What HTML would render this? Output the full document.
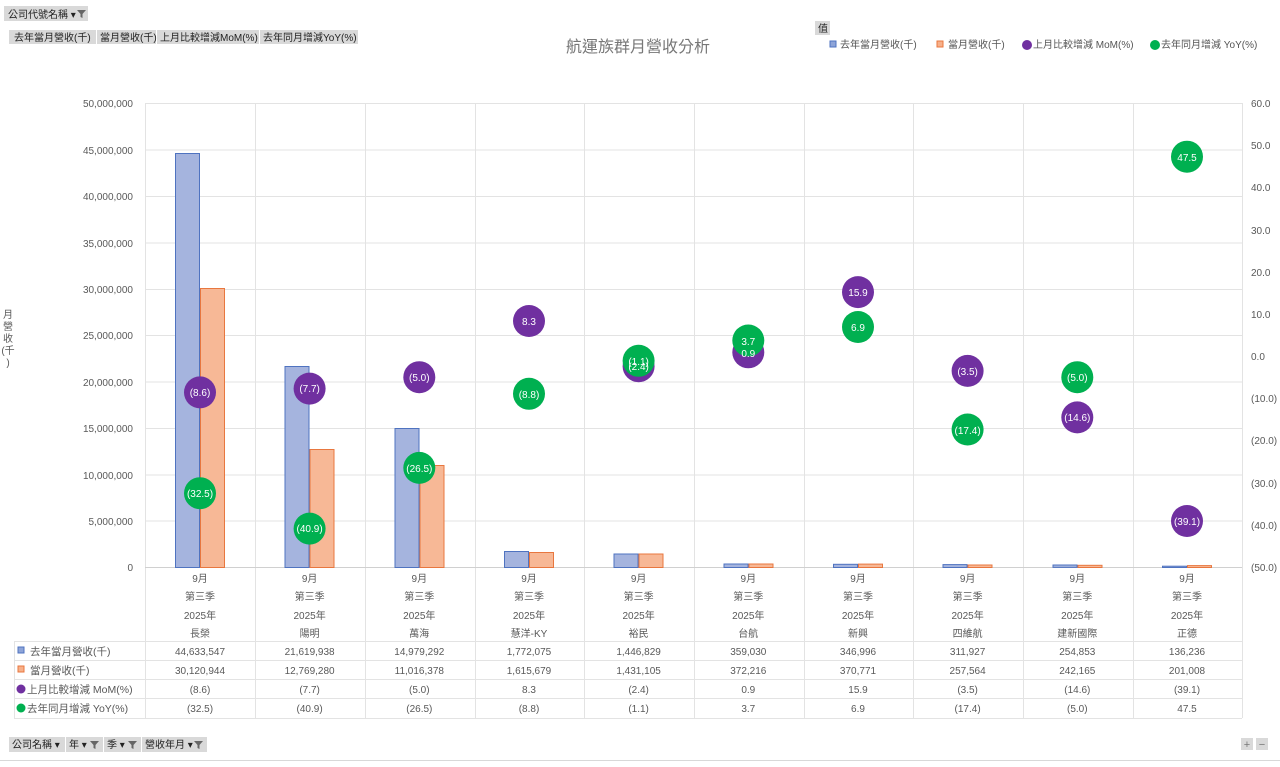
<!DOCTYPE html>
<html><head><meta charset="utf-8"><style>
body{margin:0;background:#fff;width:1280px;height:762px;overflow:hidden;font-family:"Liberation Sans","Noto Sans CJK TC",sans-serif}
svg text{font-family:"Liberation Sans","Noto Sans CJK TC",sans-serif}
</style></head><body>
<svg width="1280" height="762" viewBox="0 0 1280 762" xmlns="http://www.w3.org/2000/svg">
<rect x="4" y="6" width="84" height="15" fill="#d9d9d9"/>
<text x="8" y="18" font-size="10" fill="#222">公司代號名稱 ▾</text>
<path d="M77 10h9l-3.5 4v4l-2-1v-3z" fill="#666"/>
<rect x="9" y="30" width="87" height="14" fill="#d9d9d9"/>
<rect x="97" y="30" width="59" height="14" fill="#d9d9d9"/>
<rect x="157" y="30" width="102" height="14" fill="#d9d9d9"/>
<rect x="260" y="30" width="98" height="14" fill="#d9d9d9"/>
<g font-size="10" fill="#222"><text x="14" y="41">去年當月營收(千)</text><text x="100" y="41">當月營收(千)</text><text x="160" y="41">上月比較增減MoM(%)</text><text x="263" y="41">去年同月增減YoY(%)</text></g>
<text x="638" y="52" font-size="16" fill="#777" text-anchor="middle">航運族群月營收分析</text>
<rect x="815" y="21" width="15" height="14" fill="#d9d9d9"/><text x="818" y="32" font-size="10" fill="#222">值</text>
<g font-size="10" fill="#555">
<rect x="830" y="41" width="6" height="6" fill="#8ea4d8" stroke="#4f73c0"/><text x="840" y="48">去年當月營收(千)</text>
<rect x="937" y="41" width="6" height="6" fill="#f7b08a" stroke="#e8773f"/><text x="948" y="48">當月營收(千)</text>
<circle cx="1027" cy="45" r="5" fill="#7030a0"/><text x="1033" y="48">上月比較增減 MoM(%)</text>
<circle cx="1155" cy="45" r="5" fill="#00b050"/><text x="1161" y="48">去年同月增減 YoY(%)</text>
</g>
<g stroke="#e3e3e3" stroke-width="1">
<line x1="145" y1="103.5" x2="1242" y2="103.5"/><line x1="145" y1="150" x2="1242" y2="150"/><line x1="145" y1="196.5" x2="1242" y2="196.5"/><line x1="145" y1="243" x2="1242" y2="243"/><line x1="145" y1="289.5" x2="1242" y2="289.5"/><line x1="145" y1="335.5" x2="1242" y2="335.5"/><line x1="145" y1="382" x2="1242" y2="382"/><line x1="145" y1="428.5" x2="1242" y2="428.5"/><line x1="145" y1="475" x2="1242" y2="475"/><line x1="145" y1="521" x2="1242" y2="521"/>
<line x1="145.5" y1="103" x2="145.5" y2="718"/><line x1="255.5" y1="103" x2="255.5" y2="718"/><line x1="365.5" y1="103" x2="365.5" y2="718"/><line x1="475.5" y1="103" x2="475.5" y2="718"/><line x1="584.5" y1="103" x2="584.5" y2="718"/><line x1="694.5" y1="103" x2="694.5" y2="718"/><line x1="804.5" y1="103" x2="804.5" y2="718"/><line x1="913.5" y1="103" x2="913.5" y2="718"/><line x1="1023.5" y1="103" x2="1023.5" y2="718"/><line x1="1133.5" y1="103" x2="1133.5" y2="718"/><line x1="1242.5" y1="103" x2="1242.5" y2="718"/>
<line x1="14" y1="641.5" x2="1242" y2="641.5"/><line x1="14" y1="660.5" x2="1242" y2="660.5"/><line x1="14" y1="679.5" x2="1242" y2="679.5"/><line x1="14" y1="698.5" x2="1242" y2="698.5"/><line x1="14" y1="718.5" x2="1242" y2="718.5"/><line x1="14.5" y1="641" x2="14.5" y2="718"/>
</g>
<line x1="145" y1="567.5" x2="1242" y2="567.5" stroke="#d0d0d0"/>
<g font-size="10" fill="#595959" text-anchor="end">
<text x="133" y="107">50,000,000</text><text x="133" y="154">45,000,000</text><text x="133" y="200">40,000,000</text><text x="133" y="247">35,000,000</text><text x="133" y="293">30,000,000</text><text x="133" y="339">25,000,000</text><text x="133" y="386">20,000,000</text><text x="133" y="432">15,000,000</text><text x="133" y="479">10,000,000</text><text x="133" y="525">5,000,000</text><text x="133" y="571">0</text>
</g>
<g font-size="10" fill="#595959">
<text x="1251" y="107">60.0</text><text x="1251" y="149">50.0</text><text x="1251" y="191">40.0</text><text x="1251" y="234">30.0</text><text x="1251" y="276">20.0</text><text x="1251" y="318">10.0</text><text x="1251" y="360">0.0</text><text x="1251" y="402">(10.0)</text><text x="1251" y="444">(20.0)</text><text x="1251" y="487">(30.0)</text><text x="1251" y="529">(40.0)</text><text x="1251" y="571">(50.0)</text>
</g>
<g font-size="10" fill="#595959" text-anchor="middle"><text x="8" y="318">月</text><text x="8" y="330">營</text><text x="8" y="342">收</text><text x="8" y="354">(千</text><text x="8" y="366">)</text></g>
<g fill="#a5b4de" stroke="#4f73c0" stroke-width="1">
<rect x="175.5" y="153.5" width="24" height="414"/><rect x="285" y="366.5" width="24" height="201"/><rect x="395" y="428.5" width="24" height="139"/><rect x="504.5" y="551.5" width="24" height="16"/><rect x="614" y="554" width="24" height="13.5"/><rect x="724" y="564" width="24" height="3.5"/><rect x="833.5" y="564.3" width="24" height="3.2"/><rect x="943" y="564.6" width="24" height="2.9"/><rect x="1053" y="565" width="24" height="2.4"/><rect x="1162.5" y="566.2" width="24" height="1.3"/>
</g>
<g fill="#f7b896" stroke="#e8773f" stroke-width="1">
<rect x="200.5" y="288.5" width="24" height="279"/><rect x="310" y="449.5" width="24" height="118"/><rect x="420" y="465.5" width="24" height="102"/><rect x="529.5" y="552.5" width="24" height="15"/><rect x="639" y="554" width="24" height="13.5"/><rect x="749" y="564" width="24" height="3.5"/><rect x="858.5" y="564.1" width="24" height="3.4"/><rect x="968" y="565" width="24" height="2.5"/><rect x="1078" y="565.3" width="24" height="2.2"/><rect x="1187.5" y="565.6" width="24" height="1.9"/>
</g>
<g font-size="10" fill="#fff" text-anchor="middle">
<circle cx="200" cy="392.4" r="16" fill="#7030a0"/><text x="200" y="396">(8.6)</text>
<circle cx="309.6" cy="388.6" r="16" fill="#7030a0"/><text x="309.6" y="392">(7.7)</text>
<circle cx="419.3" cy="377.2" r="16" fill="#7030a0"/><text x="419.3" y="381">(5.0)</text>
<circle cx="529" cy="321" r="16" fill="#7030a0"/><text x="529" y="325">8.3</text>
<circle cx="638.6" cy="366.2" r="16" fill="#7030a0"/>
<circle cx="748.3" cy="352.3" r="16" fill="#7030a0"/>
<circle cx="858" cy="292.1" r="16" fill="#7030a0"/><text x="858" y="296">15.9</text>
<circle cx="967.6" cy="370.9" r="16" fill="#7030a0"/><text x="967.6" y="375">(3.5)</text>
<circle cx="1077.3" cy="417.4" r="16" fill="#7030a0"/><text x="1077.3" y="421">(14.6)</text>
<circle cx="1187" cy="521" r="16" fill="#7030a0"/><text x="1187" y="525">(39.1)</text>
<circle cx="200" cy="493.2" r="16" fill="#00b050"/><text x="200" y="497">(32.5)</text>
<circle cx="309.6" cy="528.6" r="16" fill="#00b050"/><text x="309.6" y="532">(40.9)</text>
<circle cx="419.3" cy="467.9" r="16" fill="#00b050"/><text x="419.3" y="472">(26.5)</text>
<circle cx="529" cy="393.8" r="16" fill="#00b050"/><text x="529" y="398">(8.8)</text>
<circle cx="638.6" cy="360.8" r="16" fill="#00b050"/><text x="638.6" y="365">(1.1)</text><text x="638.6" y="370">(2.4)</text>
<circle cx="748.3" cy="340.5" r="16" fill="#00b050"/><text x="748.3" y="345">3.7</text><text x="748.3" y="357">0.9</text>
<circle cx="858" cy="327" r="16" fill="#00b050"/><text x="858" y="331">6.9</text>
<circle cx="967.6" cy="429.5" r="16" fill="#00b050"/><text x="967.6" y="434">(17.4)</text>
<circle cx="1077.3" cy="377.2" r="16" fill="#00b050"/><text x="1077.3" y="381">(5.0)</text>
<circle cx="1187" cy="156.7" r="16" fill="#00b050"/><text x="1187" y="161">47.5</text>
</g>
<g font-size="10" fill="#595959" text-anchor="middle">
<text x="200" y="582">9月</text><text x="200" y="600">第三季</text><text x="200" y="619">2025年</text><text x="200" y="637">長榮</text>
<text x="309.6" y="582">9月</text><text x="309.6" y="600">第三季</text><text x="309.6" y="619">2025年</text><text x="309.6" y="637">陽明</text>
<text x="419.3" y="582">9月</text><text x="419.3" y="600">第三季</text><text x="419.3" y="619">2025年</text><text x="419.3" y="637">萬海</text>
<text x="529" y="582">9月</text><text x="529" y="600">第三季</text><text x="529" y="619">2025年</text><text x="529" y="637">慧洋-KY</text>
<text x="638.6" y="582">9月</text><text x="638.6" y="600">第三季</text><text x="638.6" y="619">2025年</text><text x="638.6" y="637">裕民</text>
<text x="748.3" y="582">9月</text><text x="748.3" y="600">第三季</text><text x="748.3" y="619">2025年</text><text x="748.3" y="637">台航</text>
<text x="858" y="582">9月</text><text x="858" y="600">第三季</text><text x="858" y="619">2025年</text><text x="858" y="637">新興</text>
<text x="967.6" y="582">9月</text><text x="967.6" y="600">第三季</text><text x="967.6" y="619">2025年</text><text x="967.6" y="637">四維航</text>
<text x="1077.3" y="582">9月</text><text x="1077.3" y="600">第三季</text><text x="1077.3" y="619">2025年</text><text x="1077.3" y="637">建新國際</text>
<text x="1187" y="582">9月</text><text x="1187" y="600">第三季</text><text x="1187" y="619">2025年</text><text x="1187" y="637">正德</text>
<g transform="translate(0,655)"><text x="200">44,633,547</text><text x="309.6">21,619,938</text><text x="419.3">14,979,292</text><text x="529">1,772,075</text><text x="638.6">1,446,829</text><text x="748.3">359,030</text><text x="858">346,996</text><text x="967.6">311,927</text><text x="1077.3">254,853</text><text x="1187">136,236</text></g>
<g transform="translate(0,674)"><text x="200">30,120,944</text><text x="309.6">12,769,280</text><text x="419.3">11,016,378</text><text x="529">1,615,679</text><text x="638.6">1,431,105</text><text x="748.3">372,216</text><text x="858">370,771</text><text x="967.6">257,564</text><text x="1077.3">242,165</text><text x="1187">201,008</text></g>
<g transform="translate(0,693)"><text x="200">(8.6)</text><text x="309.6">(7.7)</text><text x="419.3">(5.0)</text><text x="529">8.3</text><text x="638.6">(2.4)</text><text x="748.3">0.9</text><text x="858">15.9</text><text x="967.6">(3.5)</text><text x="1077.3">(14.6)</text><text x="1187">(39.1)</text></g>
<g transform="translate(0,712)"><text x="200">(32.5)</text><text x="309.6">(40.9)</text><text x="419.3">(26.5)</text><text x="529">(8.8)</text><text x="638.6">(1.1)</text><text x="748.3">3.7</text><text x="858">6.9</text><text x="967.6">(17.4)</text><text x="1077.3">(5.0)</text><text x="1187">47.5</text></g>
</g>
<g font-size="10.5" fill="#595959">
<rect x="18" y="647" width="6" height="6" fill="#8ea4d8" stroke="#4f73c0"/><text x="30" y="655">去年當月營收(千)</text>
<rect x="18" y="666" width="6" height="6" fill="#f7b08a" stroke="#e8773f"/><text x="30" y="674">當月營收(千)</text>
<circle cx="21" cy="689" r="4.5" fill="#7030a0"/><text x="27" y="693">上月比較增減 MoM(%)</text>
<circle cx="21" cy="708" r="4.5" fill="#00b050"/><text x="27" y="712">去年同月增減 YoY(%)</text>
</g>
<rect x="9" y="737" width="56" height="15" fill="#d9d9d9"/><rect x="66" y="737" width="37" height="15" fill="#d9d9d9"/><rect x="104" y="737" width="37" height="15" fill="#d9d9d9"/><rect x="142" y="737" width="65" height="15" fill="#d9d9d9"/>
<g font-size="10" fill="#222"><text x="12" y="748">公司名稱 ▾</text><text x="69" y="748">年 ▾</text><text x="107" y="748">季 ▾</text><text x="145" y="748">營收年月 ▾</text></g>
<g fill="#666"><path d="M90 741h9l-3.5 4v4l-2-1v-3z"/><path d="M128 741h9l-3.5 4v4l-2-1v-3z"/><path d="M194 741h9l-3.5 4v4l-2-1v-3z"/></g>
<rect x="1241" y="738" width="12" height="12" fill="#d9d9d9"/><rect x="1256" y="738" width="12" height="12" fill="#d9d9d9"/>
<text x="1247" y="748" font-size="11" fill="#777" text-anchor="middle">+</text><text x="1262" y="748" font-size="11" fill="#777" text-anchor="middle">−</text>
<line x1="0" y1="760.5" x2="1280" y2="760.5" stroke="#d8d8d8"/>
</svg>
</body></html>
